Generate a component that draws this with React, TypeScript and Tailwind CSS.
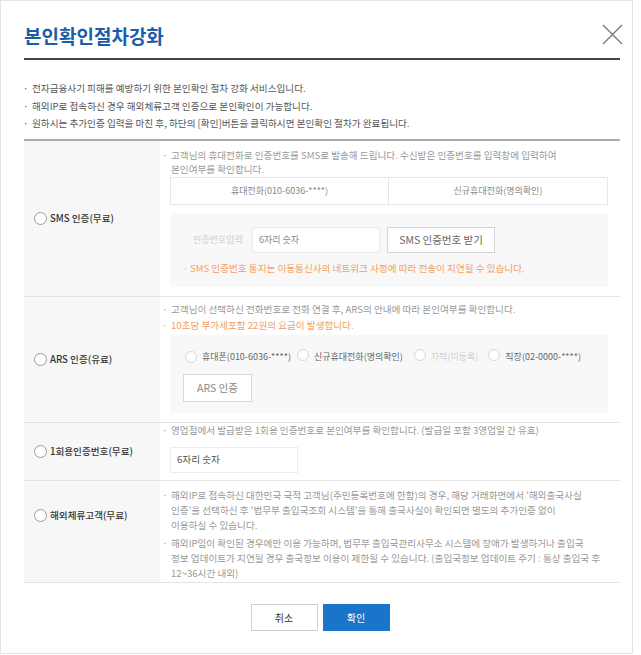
import React from "react";

const Bullet = ({ children, className = "" }: { children: React.ReactNode; className?: string }) => (
  <div className={`flex ${className}`}>
    <span className="w-[9px] shrink-0">·</span>
    <span>{children}</span>
  </div>
);

const Radio = ({ light = false, size = 13 }: { light?: boolean; size?: number }) => (
  <span
    className={`inline-block shrink-0 rounded-full bg-white border ${light ? "border-[#d6d6d6]" : "border-[#9a9a9a]"} ${size === 13 ? "w-[13px] h-[13px]" : "w-[12px] h-[12px]"}`}
  />
);

const LeftCell = ({ label, extra = "" }: { label: string; extra?: string }) => (
  <div className={`w-[136px] shrink-0 bg-[#f7f7f7] flex items-center pl-[10px] gap-[3px] ${extra}`}>
    <Radio />
    <span className="text-[9.6px] font-medium text-[#333] leading-[15px]">{label}</span>
  </div>
);

export default function App() {
  return (
    <div
      className="w-[641px] h-[655px] bg-white"
      style={{ fontFamily: '"Noto Sans CJK KR", "Noto Sans", sans-serif' }}
    >
      <div className="w-[633px] h-[654px] border border-[#e4e4e4] pl-[23px] pr-[12px]">
        {/* header */}
        <div className="flex justify-between items-start pt-[23px] pb-[10px] border-b-2 border-[#444]">
          <h1 className="text-[19px] leading-[24px] font-bold text-[#1b5ea8]">본인확인절차강화</h1>
          <svg width="21" height="21" viewBox="0 0 21 21" className="mr-[-3px]">
            <path d="M1 1 L20 20 M20 1 L1 20" stroke="#777" strokeWidth="1.3" fill="none" />
          </svg>
        </div>

        {/* intro */}
        <div className="mt-[20px] text-[9.6px] leading-[17.5px] text-[#555] -ml-[1px]">
          <Bullet>전자금융사기 피해를 예방하기 위한 본인확인 절차 강화 서비스입니다.</Bullet>
          <Bullet>해외IP로 접속하신 경우 해외체류고객 인증으로 본인확인이 가능합니다.</Bullet>
          <Bullet>원하시는 추가인증 입력을 마친 후, 하단의 [확인]버튼을 클릭하시면 본인확인 절차가 완료됩니다.</Bullet>
        </div>

        {/* table */}
        <div className="mt-[6px] border-t-2 border-[#ababab] text-[9.6px] text-[#999]">
          {/* SMS */}
          <div className="flex border-b border-[#e3e3e3]">
            <LeftCell label="SMS 인증(무료)" />
            <div className="flex-1 pl-[10px] pr-[12px] pt-[7px] pb-[9px]">
              <div className="leading-[14px] -ml-[8px]">
                <Bullet>
                  고객님의 휴대전화로 인증번호를 SMS로 발송해 드립니다. 수신받은 인증번호를 입력창에 입력하여
                  <br />
                  본인여부를 확인합니다.
                </Bullet>
              </div>
              <div className="mt-[1px] h-[28px] grid grid-cols-[218px_1fr] border border-[#e6e6e6] text-[#888] text-[9px]">
                <div className="flex items-center justify-center border-r border-[#e6e6e6]">휴대전화(010-6036-****)</div>
                <div className="flex items-center justify-center">신규휴대전화(명의확인)</div>
              </div>
              <div className="mt-[8px] h-[74px] bg-[#f8f8f8] pt-[14px] pl-[23px]">
                <div className="flex items-center h-[26px]">
                  <span className="w-[59px] text-[#cdcdcd] text-[9px]">인증번호입력</span>
                  <div className="w-[128px] h-[26px] bg-white border border-[#eaeaea] flex items-center pl-[6px] text-[#888] text-[9px]">
                    6자리 숫자
                  </div>
                  <div className="ml-[7px] w-[108px] h-[26px] bg-white border border-[#d4d4d4] flex items-center justify-center text-[10.5px] text-[#666]">
                    SMS 인증번호 받기
                  </div>
                </div>
                <div className="mt-[8px] leading-[14px] text-[#f3a062] -ml-[10px]">
                  <Bullet className="[&>span:first-child]:w-[7px]">SMS 인증번호 통지는 이동통신사의 네트워크 사정에 따라 전송이 지연될 수 있습니다.</Bullet>
                </div>
              </div>
            </div>
          </div>

          {/* ARS */}
          <div className="flex border-b border-[#e3e3e3]">
            <LeftCell label="ARS 인증(유료)" />
            <div className="flex-1 pl-[10px] pr-[12px] pt-[4px] pb-[9px]">
              <div className="leading-[16px] -ml-[8px]">
                <Bullet>고객님이 선택하신 전화번호로 전화 연결 후, ARS의 안내에 따라 본인여부를 확인합니다.</Bullet>
                <Bullet className="text-[#f3a062]">10초당 부가세포함 22원의 요금이 발생합니다.</Bullet>
              </div>
              <div className="mt-[2px] h-[78px] bg-[#f8f8f8] pt-[14px] pl-[13px]">
                <div className="flex items-center h-[16px] pl-[2px] text-[#666] text-[9px]">
                  <Radio light size={12} />
                  <span className="ml-[5px]">휴대폰(010-6036-****)</span>
                  <span className="ml-[6px]"><Radio light size={12} /></span>
                  <span className="ml-[5px]">신규휴대전화(명의확인)</span>
                  <span className="ml-[11px]"><Radio light size={12} /></span>
                  <span className="ml-[5px] text-[#cfcfcf]">자택(미등록)</span>
                  <span className="ml-[10px]"><Radio light size={12} /></span>
                  <span className="ml-[5px]">직장(02-0000-****)</span>
                </div>
                <div className="mt-[9px] w-[69px] h-[28px] bg-white border border-[#d8d8d8] flex items-center justify-center text-[10.5px] text-[#888]">
                  ARS 인증
                </div>
              </div>
            </div>
          </div>

          {/* 1회용 */}
          <div className="flex border-b border-[#e3e3e3]">
            <LeftCell label="1회용인증번호(무료)" />
            <div className="flex-1 pl-[10px] pr-[12px] pt-[0px] pb-[7px]">
              <div className="leading-[15px] -ml-[8px]">
                <Bullet>영업점에서 발급받은 1회용 인증번호로 본인여부를 확인합니다. (발급일 포함 3영업일 간 유효)</Bullet>
              </div>
              <div className="mt-[9px] w-[128px] h-[26px] bg-white border border-[#ececec] flex items-center pl-[6px] text-[#555]">
                6자리 숫자
              </div>
            </div>
          </div>

          {/* 해외 */}
          <div className="flex border-b border-[#e3e3e3]">
            <LeftCell label="해외체류고객(무료)" extra="pb-[32px]" />
            <div className="flex-1 pl-[10px] pr-[12px] pt-[7px] pb-[1px] leading-[15px]">
              <div className="-ml-[8px]">
                <Bullet>
                  해외IP로 접속하신 대한민국 국적 고객님(주민등록번호에 한함)의 경우, 해당 거래화면에서 '해외출국사실
                  <br />
                  인증'을 선택하신 후 '법무부 출입국조회 시스템'을 통해 출국사실이 확인되면 별도의 추가인증 없이
                  <br />
                  이용하실 수 있습니다.
                </Bullet>
                <Bullet className="mt-[3px]">
                  해외IP임이 확인된 경우에만 이용 가능하며, 법무부 출입국관리사무소 시스템에 장애가 발생하거나 출입국
                  <br />
                  정보 업데이트가 지연될 경우 출국정보 이용이 제한될 수 있습니다. (출입국정보 업데이트 주기 : 통상 출입국 후
                  <br />
                  12~36시간 내외)
                </Bullet>
              </div>
            </div>
          </div>
        </div>

        {/* buttons */}
        <div className="mt-[21px] flex justify-center gap-[5px] pr-[4px]">
          <button className="w-[67px] h-[27px] bg-white border border-[#cfcfcf] text-[10px] text-[#333]">취소</button>
          <button className="w-[67px] h-[27px] bg-[#1a74c9] border border-[#1a74c9] text-[10px] text-white">확인</button>
        </div>
      </div>
    </div>
  );
}
